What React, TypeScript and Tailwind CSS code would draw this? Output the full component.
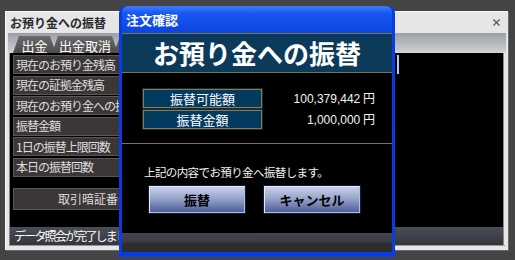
import { X } from 'lucide-react';

const rows = [
  '現在のお預り金残高',
  '現在の証拠金残高',
  '現在のお預り金への振替可能額',
  '振替金額',
  '1日の振替上限回数',
  '本日の振替回数',
];

function BackWindow() {
  return (
    <div className="flex h-[239px] w-[503px] flex-col border-l border-t border-[#f8f8f8] bg-[#e6e6e8] shadow-[1px_1px_0_#6a6a6a]">
      {/* title */}
      <div className="flex h-[21px] shrink-0 items-center justify-between pl-[4px] pr-[6px]">
        <span className="text-[12px] font-bold leading-none text-[#2a2a2a]">お預り金への振替</span>
        <X className="h-[11px] w-[11px] text-[#555]" strokeWidth={2.5} />
      </div>

      {/* tabs */}
      <div className="mx-[2px] flex h-[20px] shrink-0 items-end bg-[linear-gradient(to_bottom,#9c9fa5,#c4c6ca_80%,#d6d6d8)] pl-[5px]">
        <Tab label="出金" w="w-[43px]" />
        <Tab label="出金取消" w="w-[66px]" />
        <Tab label="" w="w-[60px]" />
      </div>

      {/* content */}
      <div className="ml-[3px] mr-[4px] flex h-[192px] shrink-0 flex-col border-l border-r border-[#8a8a8a] bg-black">
        <div className="flex flex-1 flex-col gap-[1.6px] pl-[3px] pt-[2px]">
          {rows.map((r, i) => (
            <div key={r} className="flex h-[19px] items-stretch">
              <div className="flex w-[160px] items-center overflow-hidden whitespace-nowrap border border-[#5c5656] bg-[#3c3737] pl-[2px] text-[12px] tracking-[-1px] text-[#dedede]">
                {r}
              </div>
              {i === 0 && (
                <div className="ml-[4px] w-[222px] border-r-2 border-[#a8d0f4] bg-black" />
              )}
            </div>
          ))}
          <div className="mt-[9px] flex h-[22px] w-[162px] items-center justify-center border border-[#5c5656] bg-[#3c3737] text-[12px] text-[#dcdcdc]">
            取引暗証番号
          </div>
        </div>
        <div className="flex h-[18px] shrink-0 items-center whitespace-nowrap bg-[linear-gradient(to_bottom,#4a4e58,#40434b_45%,#343538)] pl-[4px] text-[12px] tracking-[-1.8px] text-white">
          データ照会が完了しました
        </div>
      </div>
      <div className="mx-[3px] h-px bg-[#9a9a9a]" />
    </div>
  );
}

function Tab({ label, w }: { label: string; w: string }) {
  return (
    <div
      className={`-mr-[4px] flex h-[17px] ${w} items-center justify-center rounded-t-[5px] bg-[linear-gradient(to_bottom,#6a6a6a,#4c4c4c)] pt-[1px] text-[13px] leading-none text-white [clip-path:polygon(0_100%,6px_0,calc(100%-6px)_0,100%_100%)]`}
    >
      {label}
    </div>
  );
}

function ConfirmDialog() {
  return (
    <div className="absolute left-[119px] top-[6px] flex h-[251px] w-[276px] flex-col rounded-t-[7px] bg-[#0a3ce6] px-[3px] pb-[5px]">
      <div className="flex h-[27px] shrink-0 items-center rounded-t-[6px] bg-[linear-gradient(to_bottom,#3c7cfa,#1656f0_30%,#0c44e0)] pl-[4px] text-[13px] font-bold text-white">
        注文確認
      </div>
      <div className="flex flex-1 flex-col bg-black">
        <div className="flex h-[40px] shrink-0 items-center justify-center border-y border-[#7e7640] bg-[#0b3a5a] text-[26px] font-bold leading-none text-white">
          お預り金への振替
        </div>

        <div className="flex flex-col gap-[2px] pl-[21px] pr-[17px] pt-[16px]">
          <Item label="振替可能額" value="100,379,442" />
          <Item label="振替金額" value="1,000,000" />
        </div>

        <div className="mt-[14px] h-px bg-[#7e7640]" />

        <div className="mt-[21px] pl-[22px] text-[11.5px] leading-[14px] tracking-[-0.6px] text-[#f2f2f2]">
          上記の内容でお預り金へ振替します。
        </div>

        <div className="mt-[6px] flex gap-[17px] pl-[26px]">
          <DlgButton label="振替" />
          <DlgButton label="キャンセル" />
        </div>

        <div className="mt-auto h-[19px] bg-[linear-gradient(to_bottom,#41454f,#3a3d45_45%,#2e2e2e_55%,#2c2c2c)]" />
      </div>
    </div>
  );
}

function Item({ label, value }: { label: string; value: string }) {
  return (
    <div className="flex items-center">
      <div className="flex h-[19px] w-[119px] items-center justify-center border border-[#8a7c42] bg-[#033a60] text-[13px] leading-none text-white outline outline-1 outline-[#1a2a3a]">
        {label}
      </div>
      <div className="flex-1 text-right text-[12px] text-[#f2f2f2]">
        <span className="font-['Liberation_Sans',sans-serif]">{value}</span> 円
      </div>
    </div>
  );
}

function DlgButton({ label }: { label: string }) {
  return (
    <div className="flex h-[29px] w-[98px] items-center justify-center border border-[#141a30] bg-[linear-gradient(to_bottom,#ccd3ea,#9aa6cc_45%,#5e6ea2_85%,#4c5c92)] text-[13px] font-bold text-black shadow-[inset_1px_1px_0_#e4eaff,inset_-1px_-1px_0_#a8c0f0]">
      {label}
    </div>
  );
}

export default function App() {
  return (
    <div className="relative h-[260px] w-[515px] overflow-hidden bg-[#444444] pl-[5px] pt-[11px] font-['Noto_Sans_CJK_JP',sans-serif]">
      <BackWindow />
      <ConfirmDialog />
    </div>
  );
}
